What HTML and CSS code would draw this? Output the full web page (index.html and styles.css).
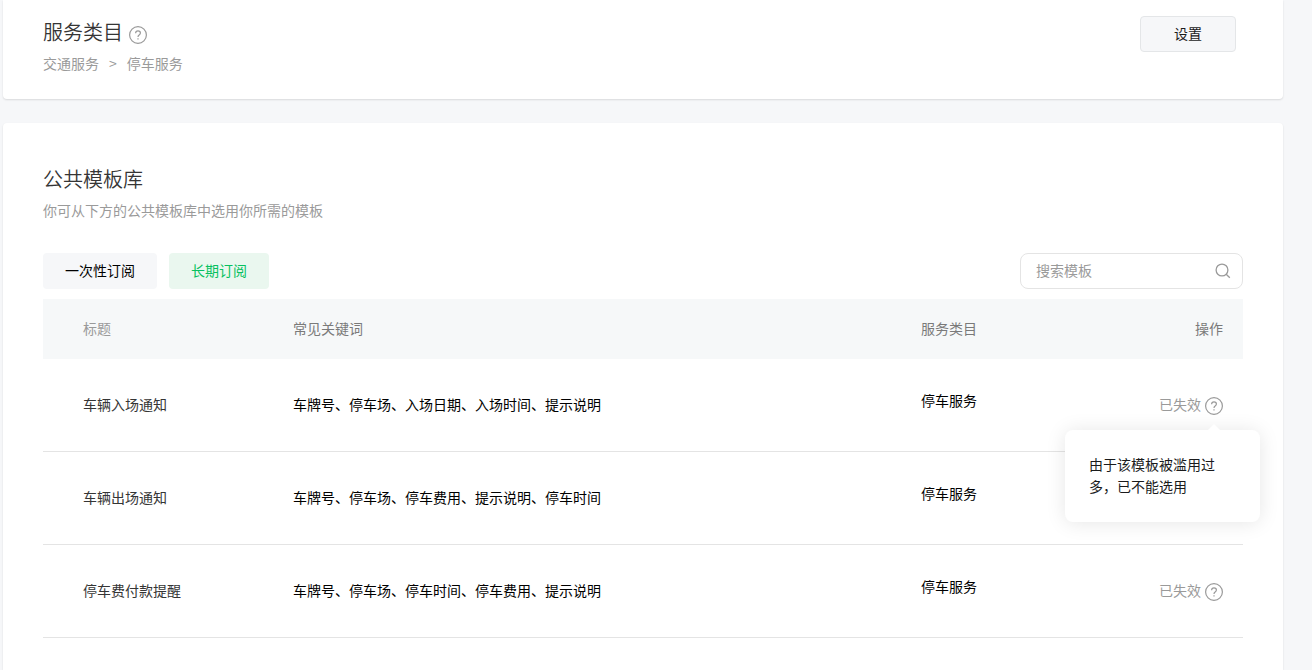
FILE: index.html
```html
<!DOCTYPE html>
<html lang="zh-CN">
  <head>
    <meta charset="UTF-8" />
    <meta name="viewport" content="width=device-width, initial-scale=1.0" />
    <title>公共模板库</title>
    <link rel="stylesheet" href="styles.css">
  </head>
  <body>
    <!-- question mark icon, shared by the title and the table -->
    <svg class="sprite" width="0" height="0" aria-hidden="true">
      <symbol id="icon-help" viewBox="0 0 18 18">
        <circle cx="9" cy="9" r="8.4" />
        <path d="M6.6 7.2c0-1.5 1-2.4 2.4-2.4s2.4.9 2.4 2.1c0 1-.6 1.5-1.3 2.1-.7.5-1.1.9-1.1 1.9" />
        <path d="M9 12.2v1.3" />
      </symbol>
    </svg>

    <main class="page">
      <section class="card category">
        <div>
          <h2 class="title">
            服务类目
            <svg class="help-icon"><use href="#icon-help" /></svg>
          </h2>
          <p class="breadcrumb">
            <span>交通服务</span>
            <span>&gt;</span>
            <span>停车服务</span>
          </p>
        </div>
        <button type="button" class="btn-setting">设置</button>
      </section>

      <section class="card library">
        <h2 class="title">公共模板库</h2>
        <p class="desc">你可从下方的公共模板库中选用你所需的模板</p>

        <div class="toolbar">
          <div class="tabs">
            <button type="button" class="tab">一次性订阅</button>
            <button type="button" class="tab active">长期订阅</button>
          </div>
          <form class="search">
            <input type="text" id="keyword" placeholder="搜索模板" aria-label="搜索模板" />
            <button type="submit" class="search-btn" aria-label="搜索">
              <svg viewBox="0 0 16 16" width="16" height="16">
                <circle cx="7" cy="7" r="5.9" />
                <path d="M11.2 11.2l3.6 3.6" />
              </svg>
            </button>
          </form>
        </div>

        <table class="templates">
          <thead>
            <tr>
              <th class="col-title">标题</th>
              <th>常见关键词</th>
              <th class="col-category">服务类目</th>
              <th class="col-action">操作</th>
            </tr>
          </thead>
          <tbody>
            <tr>
              <td class="name">车辆入场通知</td>
              <td>车牌号、停车场、入场日期、入场时间、提示说明</td>
              <td class="service">停车服务</td>
              <td class="col-action">
                <div class="status">
                  已失效
                  <svg class="help-icon"><use href="#icon-help" /></svg>
                  <div class="tooltip" role="tooltip">由于该模板被滥用过多，已不能选用</div>
                </div>
              </td>
            </tr>
            <tr>
              <td class="name">车辆出场通知</td>
              <td>车牌号、停车场、停车费用、提示说明、停车时间</td>
              <td class="service">停车服务</td>
              <td class="col-action"></td>
            </tr>
            <tr>
              <td class="name">停车费付款提醒</td>
              <td>车牌号、停车场、停车时间、停车费用、提示说明</td>
              <td class="service">停车服务</td>
              <td class="col-action">
                <div class="status">
                  已失效
                  <svg class="help-icon"><use href="#icon-help" /></svg>
                </div>
              </td>
            </tr>
          </tbody>
        </table>
      </section>
    </main>
  </body>
</html>
```
FILE: styles.css
```css
* {
  box-sizing: border-box;
}

body {
  margin: 0;
  background-color: #f6f7f9;
  font-family: "Noto Sans CJK SC", sans-serif;
  font-size: 14px;
  line-height: 22px;
  color: #000;
}

h2,
p {
  margin: 0;
}

button,
input {
  font: inherit;
}

button {
  cursor: pointer;
}

.sprite {
  position: absolute;
}

.page {
  display: flex;
  flex-direction: column;
  gap: 24px;
  min-height: 100vh;
  padding: 0 29px 0 3px;
}

.card {
  background-color: #fff;
  border-radius: 4px;
  box-shadow: 0 1px 2px rgba(0, 0, 0, 0.12);
}

.title {
  display: flex;
  align-items: center;
  gap: 6px;
  font-size: 20px;
  font-weight: 350;
  line-height: 32px;
  color: #353535;
}

.help-icon {
  width: 18px;
  height: 18px;
  flex: none;
  fill: none;
  stroke: #9a9a9a;
  stroke-width: 1.2;
}

.title .help-icon {
  margin-top: 6px;
}

/* service category */
.category {
  display: flex;
  justify-content: space-between;
  align-items: flex-start;
  padding: 16px 47px 25px 40px;
  border-radius: 0 0 4px 4px;
}

.breadcrumb {
  display: flex;
  gap: 10px;
  margin-top: 4px;
  color: #9a9a9a;
}

.btn-setting {
  width: 96px;
  height: 36px;
  padding: 0 0 2px;
  border: 1px solid #e4e6e8;
  border-radius: 4px;
  background-color: #f6f7f9;
  color: #1a1b1c;
}

/* template library */
.library {
  flex: 1;
  padding: 40px 40px 32px;
  border-radius: 4px 4px 0 0;
}

.desc {
  margin-top: 4px;
  color: #9a9a9a;
}

.toolbar {
  display: flex;
  justify-content: space-between;
  margin: 32px 0 10px;
}

.tabs {
  display: flex;
  gap: 12px;
}

.tab {
  height: 36px;
  padding: 0 22px 2px;
  border: none;
  border-radius: 4px;
  background-color: #f6f7f9;
  color: #000;
}

.tab.active {
  background-color: #eaf7ef;
  color: #07c160;
}

.search {
  display: flex;
  align-items: center;
  width: 223px;
  height: 36px;
  padding: 0 11px 0 15px;
  border: 1px solid #e4e4e4;
  border-radius: 8px;
}

.search input {
  flex: 1;
  min-width: 0;
  padding: 0 0 2px;
  border: none;
  outline: none;
  background: none;
}

.search input::placeholder {
  color: #9a9a9a;
}

.search-btn {
  display: flex;
  padding: 0;
  border: none;
  background: none;
}

.search-btn svg {
  fill: none;
  stroke: #9a9a9a;
  stroke-width: 1.3;
}

.templates {
  width: 100%;
  table-layout: fixed;
  border-collapse: separate;
  border-spacing: 0;
}

.templates th,
.templates td {
  padding: 0 0 2px 40px;
  text-align: left;
  font-weight: 400;
}

.templates th {
  height: 60px;
  background-color: #f6f8f9;
  color: #7a7a7a;
}

.templates td {
  height: 93px;
  border-bottom: 1px solid #e4e4e4;
}

.templates .col-title {
  width: 210px;
  color: #9a9a9a;
}

.templates .col-category {
  width: 200px;
}

.templates .col-action {
  width: 162px;
  padding: 0 20px 2px 0;
  text-align: right;
}

.templates .name {
  color: #353535;
}

.templates .service {
  padding-bottom: 10px;
}

.status {
  position: relative;
  display: flex;
  justify-content: flex-end;
  align-items: center;
  gap: 4px;
  color: #9a9a9a;
}

.status .help-icon {
  margin-top: 4px;
}

.tooltip {
  position: absolute;
  top: 37px;
  right: -37px;
  z-index: 1;
  width: 195px;
  padding: 23px 24px 25px;
  border-radius: 8px;
  background-color: #fff;
  box-shadow: 0 1px 20px rgba(0, 0, 0, 0.1);
  text-align: left;
  color: #1a1b1c;
}

.tooltip::before {
  content: "";
  position: absolute;
  top: -6px;
  right: 40px;
  border: 6px solid transparent;
  border-top: none;
  border-bottom-color: #fff;
}
```
